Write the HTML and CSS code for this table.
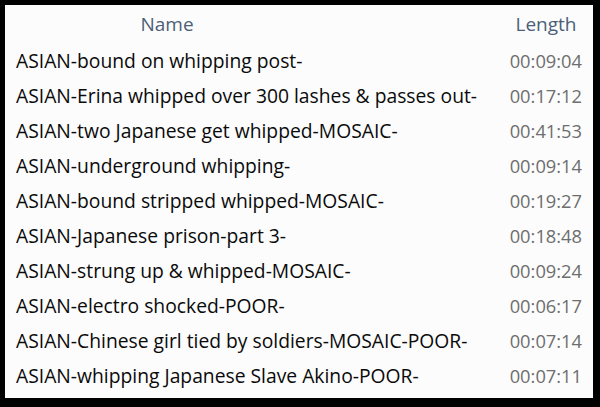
FILE: index.html
```html
<!DOCTYPE html>
<html lang="en">
<head>
  <meta charset="UTF-8" />
  <title>Video list</title>
  <link rel="stylesheet" href="styles.css">
</head>
<body>
  <div class="panel">
    <div class="head">
      <div class="col-name">Name</div>
      <div class="col-len">Length</div>
    </div>
    <div class="row"><span class="name">ASIAN-bound on whipping post-</span><span class="len">00:09:04</span></div>
    <div class="row"><span class="name">ASIAN-Erina whipped over 300 lashes &amp; passes out-</span><span class="len">00:17:12</span></div>
    <div class="row"><span class="name">ASIAN-two Japanese get whipped-MOSAIC-</span><span class="len">00:41:53</span></div>
    <div class="row"><span class="name">ASIAN-underground whipping-</span><span class="len">00:09:14</span></div>
    <div class="row"><span class="name">ASIAN-bound stripped whipped-MOSAIC-</span><span class="len">00:19:27</span></div>
    <div class="row"><span class="name">ASIAN-Japanese prison-part 3-</span><span class="len">00:18:48</span></div>
    <div class="row"><span class="name">ASIAN-strung up &amp; whipped-MOSAIC-</span><span class="len">00:09:24</span></div>
    <div class="row"><span class="name">ASIAN-electro shocked-POOR-</span><span class="len">00:06:17</span></div>
    <div class="row"><span class="name">ASIAN-Chinese girl tied by soldiers-MOSAIC-POOR-</span><span class="len">00:07:14</span></div>
    <div class="row"><span class="name">ASIAN-whipping Japanese Slave Akino-POOR-</span><span class="len">00:07:11</span></div>
  </div>
</body>
</html>
```

FILE: styles.css
```css
html, body {
  margin: 0;
  background: #000;
}

body {
  padding: 5px 7px 9px 5px;
  font-family: 'Open Sans', sans-serif;
}

.panel {
  background: #fcfcfc;
  height: 393px;
  box-sizing: border-box;
}

.head {
  display: flex;
  justify-content: space-between;
  height: 38px;
  align-items: center;
  font-size: 19px;
  color: #4c5f78;
}

.col-name {
  width: 324px;
  text-align: center;
}

.col-len {
  width: 90px;
  text-align: center;
  padding-right: 2px;
}

.row {
  display: flex;
  justify-content: space-between;
  align-items: center;
  height: 35px;
  padding: 0 11px;
  font-size: 19.3px;
}

.name {
  color: #0a0a0a;
}

.len {
  color: #6e6e6e;
  font-size: 18.3px;
}
```
